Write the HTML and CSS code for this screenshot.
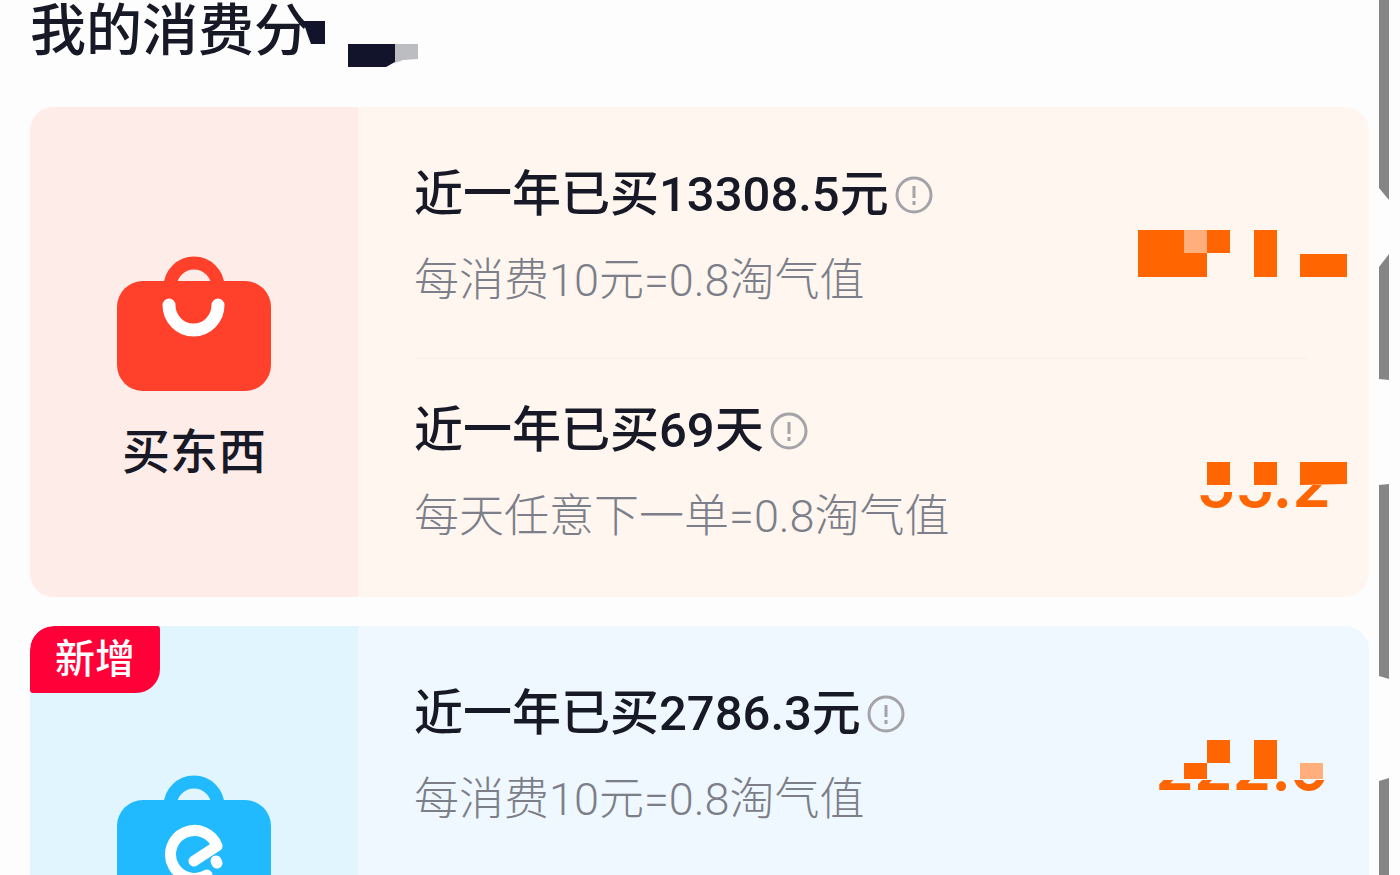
FILE: index.html
```html
<!DOCTYPE html>
<html lang="zh-CN">
<head>
<meta charset="utf-8">
<meta name="viewport" content="width=device-width, initial-scale=1">
<title>我的消费分</title>
<link rel="stylesheet" href="styles.css">
</head>
<body>
<main class="page">
  <header class="header">
    <h1 class="title">我的消费分</h1>
    <svg class="title-mask" width="120" height="48" viewBox="0 0 120 48" aria-hidden="true">
      <path fill="#fdfdfd" d="M7 5h14v31H13z"/>
      <path fill="#12142b" d="M3 1l3 0h19v23H11L8 16z"/>
      <path fill="#12142b" d="M48 24h47v18l-9 5H48z"/>
      <path fill="#bcbdc0" d="M95 24h23v15l-15 1-8 3z"/>
    </svg>
  </header>

  <section class="card card-shop">
    <div class="category">
      <svg class="bag" width="154" height="136" viewBox="0 0 154 136" aria-hidden="true">
        <path fill="none" stroke="#ff402a" stroke-width="13" d="M53 32a24 24 0 0 1 48 0"/>
        <rect y="26" width="154" height="110" rx="26" fill="#ff402a"/>
        <path fill="none" stroke="#fff" stroke-width="13" stroke-linecap="round" d="M52 50a24.5 25 0 0 0 49 0"/>
      </svg>
      <h2 class="category-name">买东西</h2>
    </div>
    <div class="rows">
      <article class="row">
        <div class="detail">
          <h3 class="row-title">近一年已买13308.5元
            <button class="info" type="button" aria-label="说明"><svg width="38" height="38" viewBox="0 0 38 38" aria-hidden="true"><circle cx="19" cy="19" r="17"/><path d="M19 10v12M19 25v4"/></svg></button>
          </h3>
          <p class="row-note">每消费10元=0.8淘气值</p>
        </div>
        <svg class="amount" width="210" height="141" viewBox="0 0 210 141" aria-hidden="true">
          <path d="M1 67h92v23H70v24H1zM117 67h23v47h-23zM163 91h47v23h-47z"/>
          <path class="amount-pale" d="M47 67h23v23H47z"/>
        </svg>
      </article>
      <article class="row">
        <div class="detail">
          <h3 class="row-title">近一年已买69天
            <button class="info" type="button" aria-label="说明"><svg width="38" height="38" viewBox="0 0 38 38" aria-hidden="true"><circle cx="19" cy="19" r="17"/><path d="M19 10v12M19 25v4"/></svg></button>
          </h3>
          <p class="row-note">每天任意下一单=0.8淘气值</p>
        </div>
        <svg class="amount" width="210" height="141" viewBox="0 0 210 141" aria-hidden="true">
          <clipPath id="days-clip"><path d="M40 93h114v20H40zM154 86h56v27h-56z"/></clipPath>
          <g clip-path="url(#days-clip)"><text x="194" y="108" text-anchor="end">55.2</text></g>
          <path d="M70 63h23v23H70zM117 63h23v23h-23zM163 63h47v22l-47 1z"/>
        </svg>
      </article>
    </div>
  </section>

  <section class="card card-food">
    <span class="badge">新增</span>
    <div class="category">
      <svg class="bag" width="154" height="136" viewBox="0 0 154 136" aria-hidden="true">
        <path fill="none" stroke="#22bafe" stroke-width="13" d="M53 32a24 24 0 0 1 48 0"/>
        <rect y="26" width="154" height="110" rx="26" fill="#22bafe"/>
        <path fill="none" stroke="#fff" stroke-width="11" stroke-linecap="round" stroke-linejoin="round" d="M77 87L100 72A24 24 0 1 0 90 101"/>
        <path fill="none" stroke="#fff" stroke-width="11" stroke-linecap="round" d="M99 87l1 2"/>
      </svg>
    </div>
    <div class="rows">
      <article class="row">
        <div class="detail">
          <h3 class="row-title">近一年已买2786.3元
            <button class="info" type="button" aria-label="说明"><svg width="38" height="38" viewBox="0 0 38 38" aria-hidden="true"><circle cx="19" cy="19" r="17"/><path d="M19 10v12M19 25v4"/></svg></button>
          </h3>
          <p class="row-note">每消费10元=0.8淘气值</p>
        </div>
        <svg class="amount" width="210" height="141" viewBox="0 0 210 141" aria-hidden="true">
          <clipPath id="food-clip"><path d="M0 98h210v20H0z"/></clipPath>
          <g clip-path="url(#food-clip)"><text x="193" y="108" text-anchor="end">222.9</text></g>
          <path d="M70 58h23v23H70zM47 81h23v16H47zM117 58h23v39h-23z"/>
          <path class="amount-pale" d="M163 81h23v16h-23z"/>
        </svg>
      </article>
    </div>
  </section>
</main>

<svg class="edge" width="10" height="875" viewBox="0 0 10 875" aria-hidden="true">
  <path d="M0 0h10v200L0 188zM0 267l10-13v126l-10-1zM0 485l10-1v195l-10-3zM0 781l10-3v97H0z"/>
</svg>
</body>
</html>
```
FILE: styles.css
```css
* {
  box-sizing: border-box;
}

body {
  position: relative;
  height: 100vh;
  margin: 0;
  overflow: hidden;
  background: #fdfdfd;
  color: #171926;
  font-family: Roboto, "Noto Sans CJK SC", sans-serif;
}

h1, h2, h3, p {
  margin: 0;
  font-weight: 500;
}

.page {
  display: flex;
  flex-direction: column;
  padding: 0 31px 0 30px;
}

.header {
  position: relative;
  margin-bottom: 45px;
}

.title {
  font-size: 56px;
  line-height: 62px;
}

.title-mask {
  position: absolute;
  top: 20px;
  left: 270px;
}

.card {
  position: relative;
  display: grid;
  grid-template-columns: 328px 1fr;
  flex: none;
  min-height: 490px;
  margin-bottom: 29px;
  overflow: hidden;
  border-radius: 24px;
}

.card-shop {
  background: #fff6f0;
}

.card-food {
  background: #f0f8ff;
}

.category {
  display: flex;
  flex-direction: column;
  align-items: center;
  gap: 32px;
  padding-top: 148px;
}

.card-shop .category {
  background: #feece8;
}

.card-food .category {
  background: #e0f5fe;
}

.category-name {
  font-size: 48px;
  line-height: 60px;
}

.bag,
.amount {
  display: block;
  flex: none;
}

.row {
  position: relative;
  display: flex;
  justify-content: space-between;
  padding: 56px 22px 52px 56px;
}

.row + .row {
  padding-top: 41px;
}

.row + .row::before {
  content: "";
  position: absolute;
  top: 0;
  left: 56px;
  right: 61px;
  height: 1px;
  background: #f8efe9;
}

.row-title {
  display: flex;
  align-items: center;
  gap: 6px;
  font-size: 49px;
  line-height: 64px;
  white-space: nowrap;
}

.info {
  display: flex;
  padding: 0;
  border: 0;
  background: none;
  cursor: pointer;
}

.info svg {
  fill: none;
  stroke: #a4a3a8;
  stroke-width: 3;
}

.row-note {
  margin-top: 29px;
  color: #7c7f89;
  font-size: 45px;
  font-weight: 300;
  line-height: 50px;
  white-space: nowrap;
}

.amount {
  fill: #ff6500;
  font-family: Inter, sans-serif;
  font-size: 62px;
  font-weight: 600;
}

.amount-pale {
  fill: #ffae7c;
}

.badge {
  position: absolute;
  top: 0;
  left: 0;
  padding: 1px 25px 0;
  border-radius: 24px 3px 24px 3px;
  background: #ff0038;
  color: #fff;
  font-size: 40px;
  font-weight: 500;
  line-height: 66px;
}

.edge {
  position: absolute;
  top: 0;
  right: 11px;
  fill: #858585;
}
```
